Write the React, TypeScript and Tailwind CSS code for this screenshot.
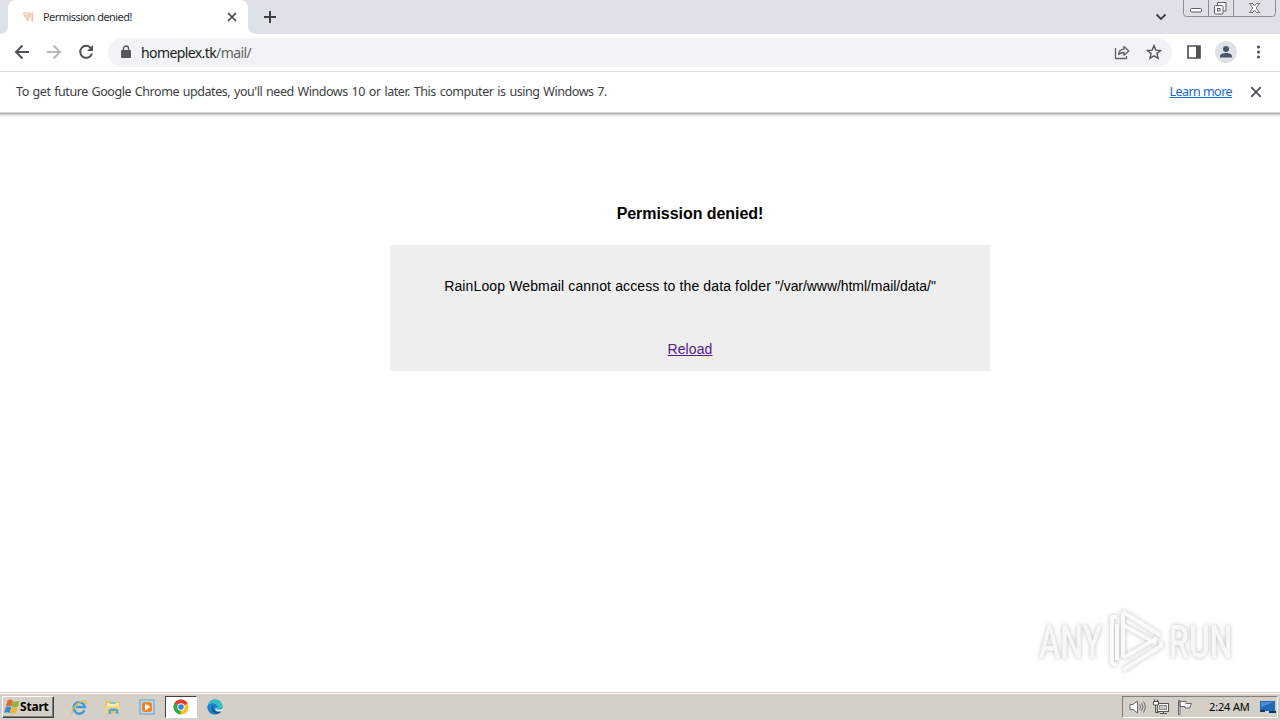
import type { ReactNode } from "react";

function TabStrip() {
  return (
    <div className="relative flex h-[34px] shrink-0 items-start bg-[#dee1e8]">
      <div className="relative ml-2 flex h-[34px] w-[240px] items-center rounded-t-lg bg-white pl-[13px] pr-[10px]">
        <svg className="absolute -left-2 bottom-0 h-2 w-2" viewBox="0 0 8 8">
          <path d="M8 0v8H0a8 8 0 0 0 8-8z" fill="#fff" />
        </svg>
        <svg className="absolute -right-2 bottom-0 h-2 w-2" viewBox="0 0 8 8">
          <path d="M0 0v8h8a8 8 0 0 1-8-8z" fill="#fff" />
        </svg>
        <svg className="h-4 w-[14px] shrink-0" viewBox="0 0 14 16" fill="none">
          <path d="M2 4h4M4 6.500h2.500" stroke="#f8d3bb" strokeWidth="1.600" />
          <path d="M2.500 4.500L6.500 11M7 3.500v9" stroke="#f6c5a6" strokeWidth="1.500" />
          <path d="M9 3.500v5M11.200 3.500v9" stroke="#f3b28c" strokeWidth="1.300" />
        </svg>
        <span className="ml-[8px] whitespace-nowrap text-[11px] leading-4 tracking-[-0.550px] text-[#2d2f33]">
          Permission denied!
        </span>
        <svg className="ml-auto h-3 w-3" viewBox="0 0 12 12" stroke="#3c4043" strokeWidth="1.700">
          <path d="M2 2l8 8M10 2l-8 8" />
        </svg>
      </div>
      <svg className="ml-[15px] mt-[10px] h-[14px] w-[14px]" viewBox="0 0 14 14" stroke="#3c4043" strokeWidth="2">
        <path d="M7 1v12M1 7h12" />
      </svg>
      <svg className="ml-auto mr-4 mt-[12px] h-[10px] w-3" viewBox="0 0 12 10" fill="none" stroke="#3c4043" strokeWidth="1.800">
        <path d="M1.500 2.500L6 7l4.500-4.500" />
      </svg>
      <WindowButtons />
    </div>
  );
}

function WindowButtons() {
  return (
    <svg className="mr-1 h-[18px] w-[93px]" viewBox="0 0 93 18" fill="none" stroke="#8b8e94">
      <path d="M.5 0v13.500q0 3 3 3h86q3 0 3-3V0M25.500 0v16M50.500 0v16" />
      <g stroke="#5b5f66">
        <rect x="7.500" y="8.500" width="11" height="3.500" rx="1" fill="#fff" />
        <path d="M34.500 5V2.500h8.500v8.500h-2.500" fill="#fff" />
        <rect x="31.500" y="5.500" width="8.500" height="8.500" rx="1" fill="#fff" />
        <rect x="34.500" y="8.500" width="2.500" height="2.500" />
        <path
          d="M66.500 3.500h3l2 2.300 2-2.300h3l-3.300 4.500 3.300 4.500h-3l-2-2.300-2 2.300h-3l3.300-4.500z"
          fill="#fff"
          strokeWidth=".9"
        />
      </g>
    </svg>
  );
}

function Toolbar() {
  return (
    <div className="flex h-[38px] shrink-0 items-center border-b border-[#dadce0] bg-white pb-px pl-[14px] pr-[15px]">
      <svg className="h-4 w-4" viewBox="0 0 16 16" fill="none" stroke="#4f5357" strokeWidth="2">
        <path d="M15 8H2M8.500 1.500L2 8l6.500 6.500" />
      </svg>
      <svg className="ml-4 h-4 w-4" viewBox="0 0 16 16" fill="none" stroke="#b5b7ba" strokeWidth="2">
        <path d="M1 8h13M7.500 1.500L14 8l-6.500 6.500" />
      </svg>
      <svg className="ml-4 h-4 w-4" viewBox="0 0 16 16" fill="none" stroke="#4f5357" strokeWidth="2">
        <path d="M13.300 4.600A6 6 0 1 0 14 9.500" />
        <path d="M15 1v6H9z" fill="#4f5357" stroke="none" />
      </svg>
      <div className="ml-[14px] flex h-[29px] flex-1 items-center rounded-full bg-[#f1f3f4] pl-[13px] pr-[10px]">
        <svg className="h-[14px] w-[10px]" viewBox="0 0 10 14">
          <rect y="5" width="10" height="8" rx="1" fill="#54585c" />
          <path d="M2.500 6V3.500a2.500 2.500 0 0 1 5 0V6" fill="none" stroke="#54585c" strokeWidth="1.400" />
        </svg>
        <span className="ml-[10px] mt-px whitespace-nowrap text-[14px] leading-5 tracking-[-0.600px] text-[#202124]">
          homeplex.tk<span className="text-[#5f6368]">/mail/</span>
        </span>
        <svg className="ml-auto h-4 w-4" viewBox="0 0 16 16" fill="none" stroke="#5f6368" strokeWidth="1.300">
          <path d="M1.500 4v10.500h11V12" />
          <path d="M4.500 10.500C5 7 7 5.300 10 5.200V2.500L14.800 7 10 11.200V8.500c-2.500 0-4 .4-5.500 2z" strokeLinejoin="round" />
        </svg>
        <svg className="ml-4 h-4 w-4" viewBox="0 0 16 16" fill="none" stroke="#54585c" strokeWidth="1.400">
          <path d="M8 1.600l1.800 4.500 4.800.4-3.700 3.100 1.200 4.700L8 11.800l-4.100 2.500 1.200-4.700L1.400 6.500l4.800-.4z" />
        </svg>
      </div>
      <svg className="ml-[15px] h-[14px] w-[14px]" viewBox="0 0 14 14">
        <path d="M1 1h12v12H1z" fill="none" stroke="#4f5357" strokeWidth="1.700" />
        <path d="M9 1h4v12H9z" fill="#4f5357" />
      </svg>
      <svg className="ml-[14px] h-[22px] w-[22px]" viewBox="0 0 22 22">
        <circle cx="11" cy="11" r="11" fill="#dee1e6" />
        <circle cx="11" cy="8" r="3" fill="#4a5468" />
        <path d="M5 16.500v-1.200c0-2.200 3.500-3.200 6-3.200s6 1 6 3.200v1.200z" fill="#4a5468" />
      </svg>
      <svg className="ml-[14px] h-4 w-[14px]" viewBox="0 0 14 16" fill="#4f5357">
        <circle cx="7.500" cy="3" r="1.600" />
        <circle cx="7.500" cy="8" r="1.600" />
        <circle cx="7.500" cy="13" r="1.600" />
      </svg>
    </div>
  );
}

function InfoBar() {
  return (
    <div className="shrink-0">
      <div className="flex h-10 items-center bg-white pl-4 pr-[18px] text-[12.500px] leading-4 text-[#3c4043]">
        <span className="whitespace-nowrap tracking-[-0.450px] [word-spacing:1px]">
          To get future Google Chrome updates, you'll need Windows 10 or later. This computer is using Windows 7.
        </span>
        <a href="#" className="ml-auto whitespace-nowrap tracking-[-0.550px] text-[#1967c8] underline">
          Learn more
        </a>
        <svg className="ml-[18px] h-3 w-3" viewBox="0 0 12 12" stroke="#4f5357" strokeWidth="1.800">
          <path d="M1.200 1.200l9.600 9.600M10.800 1.200l-9.600 9.600" />
        </svg>
      </div>
      <div className="h-px bg-[#d8d8d8]" />
      <div className="h-px bg-[#adadad]" />
      <div className="h-px bg-[#d5d5d5]" />
      <div className="h-px bg-[#e6e6e6]" />
      <div className="h-px bg-[#f4f4f4]" />
    </div>
  );
}

function Watermark() {
  return (
    <svg
      className="absolute bottom-[14px] right-[39px] h-[72px] w-[210px] drop-shadow-[0_0_2px_rgba(0,0,0,0.25)]"
      viewBox="0 0 210 72"
    >
      <g fill="#f7f7f7" fontFamily="Roboto" fontSize="46" fontWeight="500">
        <text x="8" y="52" textLength="96" lengthAdjust="spacingAndGlyphs" transform="translate(2.700) scale(.66 1)">
          ANY
        </text>
        <text x="209" y="52" textLength="96" lengthAdjust="spacingAndGlyphs" transform="scale(.66 1)">
          RUN
        </text>
      </g>
      <g fill="none" stroke="#fafafa" strokeWidth="4" strokeLinejoin="round">
        <path d="M92 6v45M92 6l37 23M92 19l33 18M92 52l34-20" />
        <path d="M86 11h-5v46l5 2M86 18v36M92 64l38-24v-5" />
      </g>
    </svg>
  );
}

function TaskButton({ active, children }: { active?: boolean; children: ReactNode }) {
  return (
    <div
      className={
        active
          ? "mx-[1px] flex h-[22px] w-8 items-center justify-center border border-b-white border-l-[#404040] border-r-white border-t-[#404040] bg-white"
          : "flex h-[22px] w-[34px] items-center justify-center"
      }
    >
      {children}
    </div>
  );
}

function Taskbar() {
  return (
    <div className="flex h-7 shrink-0 items-center border-t border-[#d4d0c8] bg-[#d4d0c8] pt-px shadow-[inset_0_1px_0_#ffffff]">
      <div className="ml-[2px] flex h-[22px] w-[52px] items-center border border-b-[#404040] border-l-white border-r-[#404040] border-t-white pl-[1px] shadow-[inset_-1px_-1px_0_#808080]">
        <svg className="h-4 w-4 shrink-0" viewBox="0 0 16 16">
          <path d="M3.500 1.500q2.500-1.800 5.200 0L7.400 7.500q-2.500-1.500-5.400 0z" fill="#e8662a" />
          <path d="M8.800 2q2.600 1.500 6.500 0l-1.500 5.800q-3 1.400-6.200 0z" fill="#8ab83f" />
          <path d="M1.800 8.200q2.500-1.500 5.400 0L5.700 14q-2.500-1.500-5.500 0z" fill="#3989cf" />
          <path d="M7.500 8.500q2.800 1.400 6 0l-1.300 5.500q-2.900 1.500-6.200 0z" fill="#f0b72d" />
        </svg>
        <span className="whitespace-nowrap text-[12px] font-bold leading-4 tracking-[-0.200px] text-black">Start</span>
      </div>
      <div className="ml-[8px] flex items-center">
        <TaskButton>
          <svg className="h-[18px] w-[18px]" viewBox="0 0 18 18" fill="none">
            <path d="M14.500 12.200a5.700 5.700 0 1 1 .4-3.200H6" stroke="#3e9ddb" strokeWidth="2.500" />
            <path d="M2.500 15.500c-3-2 5.500-13 13-12.500 1.500.3 1 2 .2 3" stroke="#e7bb43" strokeWidth="1.300" />
          </svg>
        </TaskButton>
        <TaskButton>
          <svg className="h-4 w-4" viewBox="0 0 16 16">
            <path d="M0 2h6l1 1h8v11H0z" fill="#e3c36c" />
            <path d="M2 4h12v5H2z" fill="#f9edbd" />
            <path d="M5 3h6v2H5z" fill="#8fc7b2" />
            <path d="M0 7h15v6.500h-3V11H5v3H0z" fill="#f1d783" />
            <path d="M3.500 15v-3q0-2.500 2-2.500h6q2 0 2 2.500v3h-2.500v-3h-5v3z" fill="#58a9d6" />
          </svg>
        </TaskButton>
        <TaskButton>
          <svg className="h-4 w-4" viewBox="0 0 16 16">
            <rect x="1" y="1" width="14" height="14" fill="#badcf4" stroke="#5b9fd0" />
            <rect x="3" y="3" width="10" height="10" rx="2.500" fill="#f58220" />
            <path d="M6 4.500v7L11.500 8z" fill="#fff" />
          </svg>
        </TaskButton>
        <TaskButton active>
          <svg className="h-4 w-4" viewBox="0 0 16 16">
            <circle cx="8" cy="8" r="7.500" fill="#fbc116" />
            <path d="M8 8L1.500 4.200A7.500 7.500 0 0 1 14.500 4.200z" fill="#e33b2e" />
            <path d="M1.500 4.200L8 8l-.5 7.500a7.500 7.500 0 0 1-6-11.300z" fill="#2da94f" />
            <path d="M8 8L1.500 4.200 4 3l8 2z" fill="#e33b2e" />
            <circle cx="8" cy="8" r="3.700" fill="#fff" />
            <circle cx="8" cy="8" r="2.800" fill="#3b7ded" />
          </svg>
        </TaskButton>
        <TaskButton>
          <svg className="h-4 w-4" viewBox="0 0 16 16">
            <circle cx="8" cy="8" r="7.500" fill="#1679c8" />
            <path d="M.8 6.500C2.500-2 15-1.200 15.500 7c0 3.500-5 4-6 2.500 2-3.500-2-6-5-5C2.500 5 1.300 5.800.8 6.500z" fill="#38bdc4" />
            <path d="M6 6C2 9 5 15 10 15 4 16.500 0 12 .5 7.500 2 5.500 4 5.300 6 6z" fill="#1683d3" />
            <path d="M6.200 8c-.8 4 4 6 8 4.200C12 16 5.500 14.500 5 11c-.2-1.300.5-2.300 1.200-3z" fill="#164f94" />
            <path d="M9 8c0 3 4 3.500 7 1l-1 3c-3 1.200-6.500.5-6.800-1.500z" fill="#d9edf2" />
          </svg>
        </TaskButton>
      </div>
      <div className="ml-auto mr-[2px] flex h-[22px] w-[156px] items-center border border-b-white border-l-[#808080] border-r-white border-t-[#808080] pl-[6px]">
        <svg className="h-4 w-[17px]" viewBox="0 0 17 16" fill="none" stroke="#6b6b6b">
          <path d="M1 5.500h3L8.500 2v12L4 10.500H1z" fill="#fff" />
          <path d="M10.500 5.500q2 2.500 0 5M12.500 4q3 4 0 8M14.500 2.500q3.500 5.500 0 11" />
        </svg>
        <svg className="ml-[7px] h-4 w-4" viewBox="0 0 16 16" fill="none" stroke="#555">
          <rect x="4.500" y="4.500" width="11" height="8" fill="#f5f5f5" />
          <rect x="6.500" y="6.500" width="7" height="4" fill="#c8c8c8" stroke="#888" />
          <path d="M7 14.500h7M10.500 12v2M2.500 6v7.500H6" />
          <path d="M.5 2.500h5V6H.5zM1.500.5v2M4.500.5v2" fill="#fff" />
        </svg>
        <svg className="ml-2 h-4 w-4" viewBox="0 0 16 16" fill="#fff" stroke="#666">
          <path d="M1.500 1.500h1.500v14H1.500zM3 2.500h6v2h5.500L12.500 9H8V7.500H3z" />
        </svg>
        <span className="ml-4 whitespace-nowrap text-[11px] leading-4 tracking-[-0.160px] text-black">2:24 AM</span>
        <svg className="ml-auto mr-[1px] h-4 w-4" viewBox="0 0 16 16">
          <path d="M0 2h15v10H0z" fill="#2469b5" />
          <path d="M1 3h13L1 8z" fill="#4b91d2" />
          <path d="M0 11h5v2H0zM9 12h7v2H9z" fill="#17365f" />
        </svg>
      </div>
    </div>
  );
}

export default function App() {
  return (
    <div className="flex h-[720px] w-[1280px] flex-col overflow-hidden bg-white font-['Noto_Sans',sans-serif]">
      <TabStrip />
      <Toolbar />
      <InfoBar />
      <main className="relative flex-1 pl-[100px] font-['Liberation_Sans',Arial,sans-serif] text-black">
        <div className="mx-auto w-[600px] pt-[88px] text-center">
          <h1 className="text-[16px] font-bold leading-[18px] tracking-[-0.050px]">Permission denied!</h1>
          <div className="mt-[22px] h-[126px] bg-[#eeeeee] pt-[33px]">
            <p className="whitespace-nowrap text-[14px] leading-4">
              <span className="tracking-[0.130px]">RainLoop Webmail cannot access to the data folder </span>
              <span className="tracking-[-0.060px]">"/var/www/html/mail/data/"</span>
            </p>
            <a href="#" className="mt-[47px] inline-block text-[14px] leading-4 tracking-[0.100px] text-[#551a8b] underline">
              Reload
            </a>
          </div>
        </div>
        <Watermark />
      </main>
      <Taskbar />
    </div>
  );
}
